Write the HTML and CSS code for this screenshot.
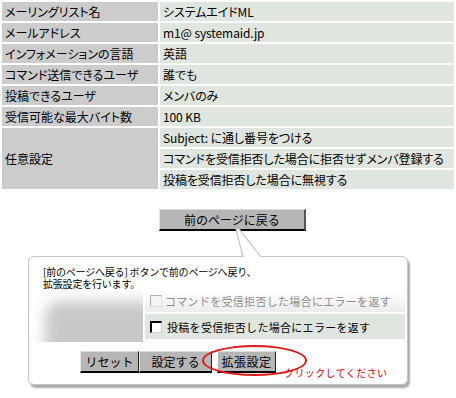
FILE: index.html
```html
<!DOCTYPE html>
<html lang="ja">
<head>
    <meta charset="UTF-8">
    <meta name="viewport" content="width=device-width, initial-scale=1.0">
    <title>拡張設定</title>
    <link rel="stylesheet" href="styles.css">
</head>
<body>
    <table class="info">
        <tr><th>メーリングリスト名</th><td>システムエイドML</td></tr>
        <tr><th>メールアドレス</th><td>m1@ systemaid.jp</td></tr>
        <tr><th>インフォメーションの言語</th><td>英語</td></tr>
        <tr><th>コマンド送信できるユーザ</th><td>誰でも</td></tr>
        <tr><th>投稿できるユーザ</th><td>メンバのみ</td></tr>
        <tr><th>受信可能な最大バイト数</th><td>100 KB</td></tr>
        <tr><th rowspan="3">任意設定</th><td>Subject: に通し番号をつける</td></tr>
        <tr><td>コマンドを受信拒否した場合に拒否せずメンバ登録する</td></tr>
        <tr><td>投稿を受信拒否した場合に無視する</td></tr>
    </table>

    <div class="back">
        <button type="button" class="btn btn-back">前のページに戻る</button>
    </div>

    <div class="note">
        <!-- 吹き出しのしっぽ -->
        <svg class="tail" width="32" height="29" viewBox="0 0 32 29">
            <polygon points="4,0 7,0 29,28 11,28" fill="#fff"/>
            <line x1="4" y1="0" x2="11" y2="28" stroke="#c4c4c4" stroke-width="1.2"/>
            <line x1="7" y1="0" x2="29" y2="28" stroke="#c4c4c4" stroke-width="1.2"/>
        </svg>

        <p class="note-text">[前のページへ戻る] ボタンで前のページへ戻り、</p>
        <p class="note-text">拡張設定を行います。</p>

        <div class="shot">
            <div class="fade"><div class="fade-box"></div></div>
            <div class="shot-rows">
                <div class="shot-row off"><span class="check"></span>コマンドを受信拒否した場合にエラーを返す</div>
                <div class="shot-row on"><span class="check"></span>投稿を受信拒否した場合にエラーを返す</div>
            </div>
        </div>

        <div class="actions">
            <button type="button" class="btn btn-small">リセット</button>
            <button type="button" class="btn btn-small">設定する</button>
            <span class="mark">
                <button type="button" class="btn btn-small btn-ext">拡張設定</button>
                <span class="ring"></span>
            </span>
            <span class="hint">クリックしてください</span>
        </div>
    </div>
</body>
</html>
```

FILE: styles.css
```css
/* 全体 */
* {
    margin: 0;
    padding: 0;
    box-sizing: border-box;
}

body {
    font-family: "Noto Sans CJK JP", "Noto Sans", sans-serif;
    font-size: 12px;
    color: #000;
    background-color: #fff;
    width: 456px;
    height: 398px;
    overflow: hidden;
}

/* 設定一覧 */
.info {
    width: 100%;
    border-collapse: separate;
    border-spacing: 2px;
    font-feature-settings: "palt";
}

.info th,
.info td {
    height: 19px;
    padding: 0 3px;
    text-align: left;
    font-weight: normal;
    white-space: nowrap;
    line-height: 19px;
}

.info th {
    width: 156px;
    padding-left: 3px;
    background-color: #cccccc;
}

.info td {
    background-color: #dfe5df;
    letter-spacing: -0.1px;
}

/* ボタン */
.btn {
    font-family: inherit;
    font-size: 12px;
    color: #000;
    background-color: #b6b6b6;
    border-style: solid;
    border-width: 1px 1px 2px 1px;
    border-color: #dcdcdc #202020 #000 #e6e6e6;
    cursor: pointer;
}

.back {
    padding-left: 159px;
    margin-top: 18px;
}

.btn-back {
    width: 147px;
    height: 22px;
    border-right-width: 2px;
    border-right-color: #555;
}

/* 説明の吹き出し */
.note {
    position: relative;
    width: 380px;
    height: 129px;
    margin: 25px 0 0 28px;
    border: 1px solid #c4c4c4;
    border-radius: 6px;
    box-shadow: 2px 3px 2px #a8a8a8;
    background-color: #fff;
}

.tail {
    position: absolute;
    left: 203px;
    top: -28px;
}

.note-text {
    padding-left: 14px;
    font-size: 10px;
    line-height: 12px;
    letter-spacing: -0.2px;
    white-space: nowrap;
}

.note-text:first-of-type {
    margin-top: 9px;
}

/* 画面の切り抜き */
.shot {
    display: flex;
    height: 52px;
}

.fade {
    width: 114px;
    overflow: hidden;
    background-color: #fff;
}

.fade-box {
    width: 150px;
    height: 80px;
    margin: 11px 0 0 16px;
    background-color: #c8c8c8;
    border-radius: 16px;
    filter: blur(7px);
}

.shot-rows {
    flex: 1;
    margin-left: 2px;
    margin-right: 2px;
}

.shot-row {
    display: flex;
    align-items: center;
    padding-left: 5px;
    font-size: 11px;
    letter-spacing: 0.3px;
    white-space: nowrap;
}

.shot-row.off {
    height: 22px;
    color: #8c8c8c;
    background: linear-gradient(to bottom, #ffffff, #ececec);
}

.shot-row.on {
    height: 25px;
    margin-top: 2px;
    background-color: #dfe5df;
}

.check {
    display: inline-block;
    width: 12px;
    height: 12px;
    margin-right: 3px;
    background-color: #fff;
    border-style: solid;
    border-width: 1px;
}

.off .check {
    border-color: #b0b0b0 #dcdcdc #dcdcdc #b0b0b0;
    background-color: #f4f4f4;
}

.on .check {
    margin-right: 5px;
    border-width: 2px 1px 1px 2px;
    border-color: #000 #d0d0d0 #d0d0d0 #000;
}

/* 下のボタン列 */
.actions {
    display: flex;
    align-items: flex-end;
    padding-left: 51px;
    margin-top: 9px;
}

.btn-small {
    height: 22px;
    padding: 0;
}

.btn-small:nth-child(1) {
    width: 59px;
}

.btn-small:nth-child(2) {
    width: 73px;
}

.mark {
    position: relative;
    display: inline-block;
    margin-left: 5px;
}

.btn-ext {
    width: 77px;
    letter-spacing: 0.5px;
    border-left-color: #fff;
}

.ring {
    position: absolute;
    left: -15px;
    top: -6px;
    width: 105px;
    height: 31px;
    border: 2px solid #e01818;
    border-radius: 50%;
    pointer-events: none;
}

.hint {
    margin: 0 0 -7px 8px;
    font-size: 10px;
    letter-spacing: 0.4px;
    color: #e00000;
    white-space: nowrap;
}
```
